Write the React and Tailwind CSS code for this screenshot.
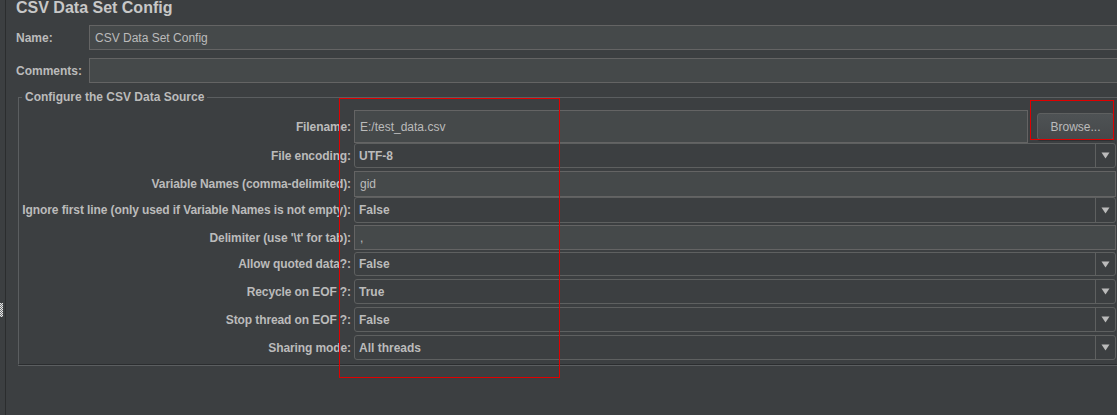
import React from "react";

const rows = [
    { label: "Filename:", type: "file", value: "E:/test_data.csv", h: "h-[33px]", mt: "mt-[6px]" },
    { label: "File encoding:", type: "combo", value: "UTF-8", h: "h-[25px]", mt: "mt-0" },
    { label: "Variable Names (comma-delimited):", type: "text", value: "gid", h: "h-[26px]", mt: "mt-[3px]" },
    { label: "Ignore first line (only used if Variable Names is not empty):", type: "combo", value: "False", h: "h-[26px]", mt: "mt-0" },
    { label: "Delimiter (use '\\t' for tab):", type: "text", value: ",", h: "h-[25px]", mt: "mt-[2px]" },
    { label: "Allow quoted data?:", type: "combo", value: "False", h: "h-[24px]", mt: "mt-[2px]" },
    { label: "Recycle on EOF ?:", type: "combo", value: "True", h: "h-[25px]", mt: "mt-[3px]" },
    { label: "Stop thread on EOF ?:", type: "combo", value: "False", h: "h-[25px]", mt: "mt-[3px]" },
    { label: "Sharing mode:", type: "combo", value: "All threads", h: "h-[25px]", mt: "mt-[3px]" },
];

function TextField({ value, className = "" }) {
    return (
        <div className={"flex items-center h-full bg-[#45494a] border border-[#646464] pl-[5px] text-[12px] text-[#bbbbbb] whitespace-nowrap " + className}>
            {value}
        </div>
    );
}

function Combo({ value }) {
    return (
        <div className="flex items-stretch flex-1 h-full border border-[#5e6060] rounded-[3px] bg-[#3c3f41]">
            <div className="flex-1 flex items-center pl-[4px] text-[12px] font-bold text-[#bbbbbb] whitespace-nowrap">{value}</div>
            <div className="w-[20px] border-l border-[#5e6060] flex items-center justify-center">
                <svg width="9" height="7" viewBox="0 0 9 7">
                    <path d="M0.5 0.5 L8.5 0.5 L4.5 6.5 Z" fill="#bbbbbb" />
                </svg>
            </div>
        </div>
    );
}

function Grip() {
    const cells = [];
    for (let y = 0; y < 14; y++) {
        for (let x = 0; x < 3; x++) {
            cells.push(
                <rect key={x + "-" + y} x={x} y={y} width="1" height="1" fill={(x + y) % 2 === 0 ? "#e6e6e6" : "#6f7274"} />
            );
        }
    }
    return (
        <svg width="3" height="14" viewBox="0 0 3 14" className="mt-[303px]">
            {cells}
        </svg>
    );
}

export default function App() {
    return (
        <div className="relative w-[1117px] h-[415px] overflow-hidden bg-[#3c3f41] flex font-['Liberation_Sans',Arial,sans-serif] text-[#bbbbbb]">
            <div className="w-[5px] shrink-0">
                <Grip />
            </div>
            <div className="w-px shrink-0 bg-[#2b2d2e]"></div>

            <div className="w-[1120px] shrink-0 pl-[10px]">
                <div className="h-[15px] leading-[16px] text-[16px] font-bold text-[#c8c8c8] whitespace-nowrap">CSV Data Set Config</div>

                <div className="flex items-center h-[25px] mt-[10px]">
                    <div className="w-[73px] text-[12px] font-bold">Name:</div>
                    <TextField value="CSV Data Set Config" className="flex-1" />
                </div>
                <div className="flex items-center h-[25px] mt-[8px]">
                    <div className="w-[73px] text-[12px] font-bold">Comments:</div>
                    <TextField value="" className="flex-1" />
                </div>

                <fieldset className="ml-[2px] mt-[7px] w-[1100px] border border-[#5b5e60] border-b-[#2b2d2f] shadow-[0_1px_0_#5b5e60] pb-[4px]">
                    <legend className="ml-[3px] px-[3px] text-[12px] leading-[14px] font-bold">Configure the CSV Data Source</legend>
                    {rows.map((row) => (
                        <div key={row.label} className={"flex items-center pr-[1px] " + row.h + " " + row.mt}>
                            <div className="w-[335px] shrink-0 pr-[3px] text-right text-[12px] tracking-[-0.1px] font-bold whitespace-nowrap">{row.label}</div>
                            {row.type === "combo" && <Combo value={row.value} />}
                            {row.type === "text" && <TextField value={row.value} className="flex-1" />}
                            {row.type === "file" && (
                                <>
                                    <TextField value={row.value} className="flex-1" />
                                    <button className="ml-[9px] mr-[2px] w-[77px] h-[27px] rounded-[3px] border border-[#5e6060] bg-gradient-to-b from-[#4e5254] to-[#46494b] text-[12px] text-[#bbbbbb] shadow-[0_1px_0_#2f3133]">
                                        Browse...
                                    </button>
                                </>
                            )}
                        </div>
                    ))}
                </fieldset>
            </div>

            {/* red annotation boxes */}
            <div className="absolute left-[339px] top-[98px] w-[221px] h-[280px] border border-[#e00000]"></div>
            <div className="absolute left-[1030px] top-[100px] w-[84px] h-[40px] border border-[#e00000]"></div>
        </div>
    );
}
